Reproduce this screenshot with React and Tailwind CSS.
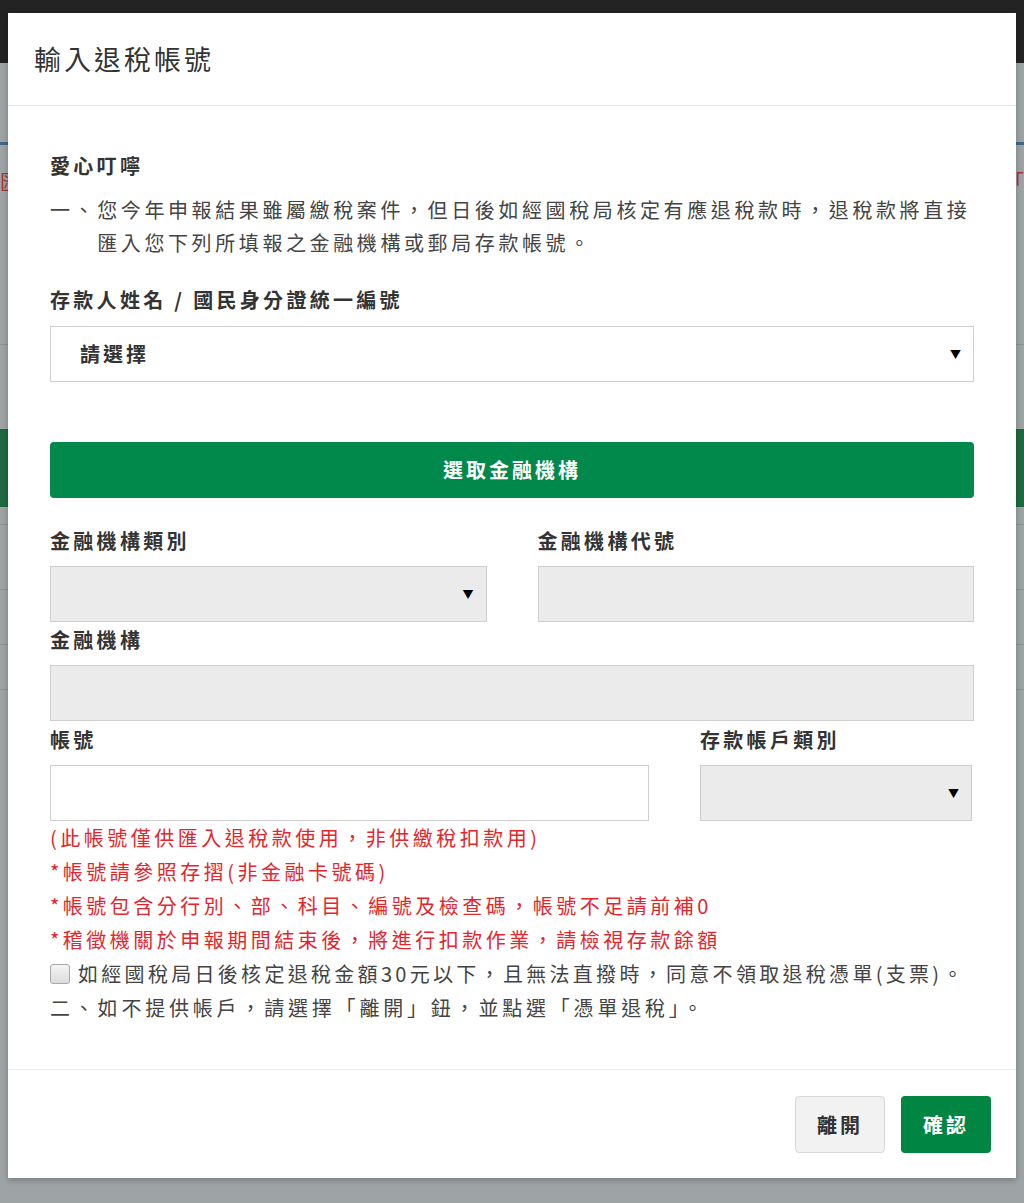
import React from "react";

// 退稅帳號 modal over a dimmed page
const font = "font-['Noto_Sans_CJK_TC','Noto_Sans',sans-serif]";

const Label = ({ children }) => (
	<div className="text-[20px] leading-[34px] tracking-[3.3px] font-bold text-[#333]">{children}</div>
);

const FakeSelect = ({ text, gray }) => (
	<div
		className={`h-[56px] border border-[#cfcfcf] flex items-center justify-between pl-[29px] pr-[12px] ${
			gray ? "bg-[#ebebeb]" : "bg-white"
		}`}
	>
		<span className="text-[20px] tracking-[3px] font-bold text-[#333]">{text}</span>
		<span className="text-[11px] text-black">▼</span>
	</div>
);

const FakeInput = ({ gray }) => (
	<div className={`h-[56px] border border-[#cfcfcf] ${gray ? "bg-[#ebebeb]" : "bg-white"}`} />
);

const notes = [
	"(此帳號僅供匯入退稅款使用，非供繳稅扣款用)",
	"*帳號請參照存摺(非金融卡號碼)",
	"*帳號包含分行別、部、科目、編號及檢查碼，帳號不足請前補0",
	"*稽徵機關於申報期間結束後，將進行扣款作業，請檢視存款餘額"
];

export default function App() {
	return (
		<div className={`relative w-[1024px] h-[1203px] overflow-hidden bg-[#9ea3a6] ${font}`}>
			{/* dimmed page behind */}
			<div className="h-[63px] bg-[#232323]" />
			<div className="mt-[79px] h-[3px] bg-[#3f6688]" />
			<div className="flex justify-between px-0 mt-[20px]">
				<span className="text-[20px] text-[#a33] leading-[34px]">匯</span>
				<span className="text-[20px] text-[#a33] leading-[34px]">「</span>
			</div>
			<div className="mt-[145px] h-px bg-[#8c9194]" />
			<div className="mt-[84px] h-[78px] bg-[#1d6a40]" />
			<div className="mt-[17px] h-px bg-[#8c9194]" />
			<div className="mt-[64px] h-px bg-[#8c9194]" />
			<div className="mt-[54px] h-px bg-[#8c9194]" />
			<div className="mt-[44px] h-px bg-[#8c9194]" />

			{/* modal */}
			<div className="absolute left-[8px] top-[13px] w-[1008px] h-[1165px] bg-white shadow-[0_2px_6px_rgba(0,0,0,0.25)] flex flex-col">
				<div className="h-[93px] border-b border-[#e8e8e8] flex items-center pl-[26px]">
					<h1 className="text-[27px] tracking-[3px] text-[#333] font-normal">輸入退稅帳號</h1>
				</div>

				<div className="px-[42px] pt-[43px] pb-[41px] flex-1">
					<Label>愛心叮嚀</Label>
					<div className="mt-[10px] flex text-[20px] leading-[33px] tracking-[3.6px] text-[#444]">
						<span className="shrink-0">一、</span>
						<span>您今年申報結果雖屬繳稅案件，但日後如經國稅局核定有應退稅款時，退稅款將直接匯入您下列所填報之金融機構或郵局存款帳號。</span>
					</div>

					<div className="mt-[24px]">
						<Label>存款人姓名 / 國民身分證統一編號</Label>
					</div>
					<div className="mt-[9px]">
						<FakeSelect text="請選擇" />
					</div>

					<button className="mt-[60px] w-full h-[56px] rounded-[4px] bg-[#00894b] text-white text-[20px] tracking-[3px] font-bold">
						選取金融機構
					</button>

					<div className="mt-[26px] grid grid-cols-2 gap-x-[51px]">
						<div>
							<Label>金融機構類別</Label>
							<div className="mt-[8px]">
								<FakeSelect text="" gray />
							</div>
						</div>
						<div>
							<Label>金融機構代號</Label>
							<div className="mt-[8px]">
								<FakeInput gray />
							</div>
						</div>
					</div>

					<div className="mt-[1px]">
						<Label>金融機構</Label>
						<div className="mt-[8px]">
							<FakeInput gray />
						</div>
					</div>

					<div className="mt-[2px] grid grid-cols-3 gap-x-[51px]">
						<div className="col-span-2">
							<Label>帳號</Label>
							<div className="mt-[8px]">
								<FakeInput />
							</div>
						</div>
						<div className="pr-[2px]">
							<Label>存款帳戶類別</Label>
							<div className="mt-[8px]">
								<FakeSelect text="" gray />
							</div>
						</div>
					</div>

					<div className="text-[20px] leading-[34px] tracking-[3.5px]">
						{notes.map((n) => (
							<div key={n} className="text-[#e3262d]">
								{n}
							</div>
						))}
						<div className="flex items-center gap-[8px] text-[#444]">
							<span className="w-[20px] h-[20px] rounded-[3px] border border-[#a9a9a9] bg-gradient-to-b from-[#f4f4f4] to-[#dcdcdc] shrink-0" />
							<span className="tracking-[3.3px]">如經國稅局日後核定退稅金額30元以下，且無法直撥時，同意不領取退稅憑單(支票)。</span>
						</div>
						<div className="text-[#444] tracking-[3.8px]">二、如不提供帳戶，請選擇「離開」鈕，並點選「憑單退稅」。</div>
					</div>
				</div>

				<div className="h-[109px] border-t border-[#ececec] flex items-start justify-end gap-[16px] pt-[26px] pr-[25px]">
					<button className="w-[90px] h-[57px] rounded-[4px] border border-[#d9d9d9] bg-[#f2f2f2] text-[20px] tracking-[3px] text-[#333] font-bold">
						離開
					</button>
					<button className="w-[90px] h-[57px] rounded-[4px] bg-[#008542] text-[20px] tracking-[3px] text-white font-bold">
						確認
					</button>
				</div>
			</div>
		</div>
	);
}
